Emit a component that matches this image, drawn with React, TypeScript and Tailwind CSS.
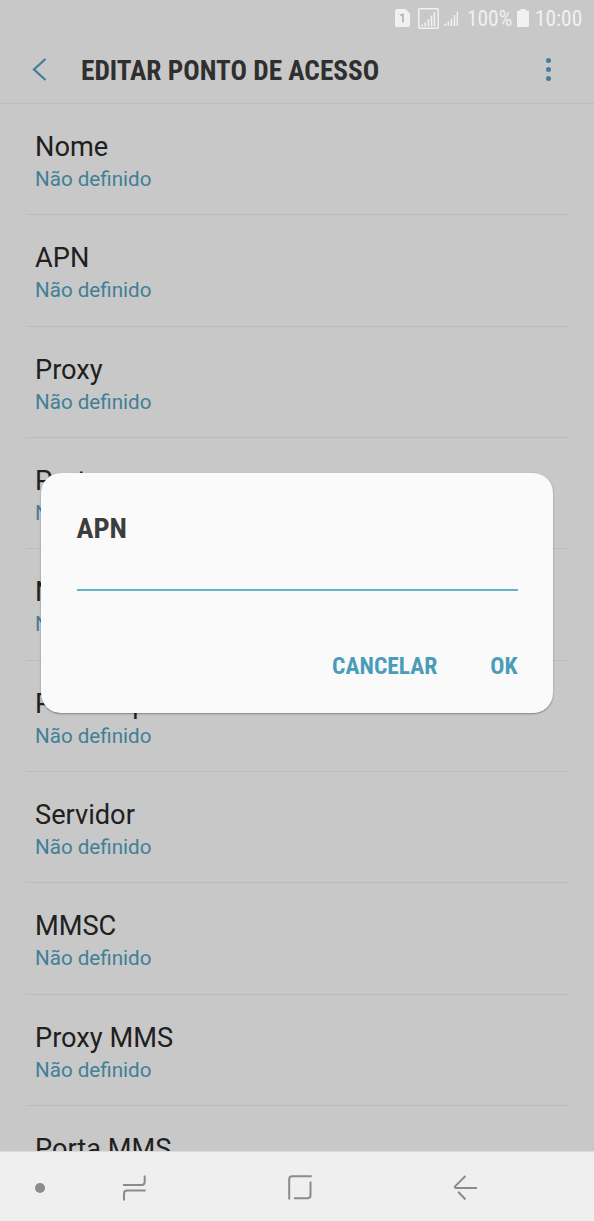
const fields = [
  "Nome",
  "APN",
  "Proxy",
  "Porta",
  "Nome de utilizador",
  "Palavra-passe",
  "Servidor",
  "MMSC",
  "Proxy MMS",
  "Porta MMS",
];

const condensed =
  "font-['Roboto_Condensed',Roboto,sans-serif] font-stretch-condensed whitespace-nowrap";

function SignalBars() {
  return (
    <path
      d="M1.2 15v-2.200M4.300 15v-4.500M7.400 15V7.500M10.500 15V4M13.400 15V.5"
      stroke="currentColor"
      strokeWidth="1.6"
    />
  );
}

function StatusBar() {
  return (
    <div className="flex h-9 items-center justify-end pr-3 text-[#f1f1f1]">
      <svg className="mr-2 h-[18px] w-[15px]" viewBox="0 0 15 18">
        <path
          d="M2 0h8.500L15 4.500V16a2 2 0 0 1-2 2H2a2 2 0 0 1-2-2V2a2 2 0 0 1 2-2Z"
          fill="currentColor"
        />
        <path d="M5 6.500 8 5.300V13.500" stroke="#b8b8b8" strokeWidth="1.8" fill="none" />
      </svg>
      <svg className="mr-[5px] h-[21px] w-[21px]" viewBox="0 0 21 21" fill="none">
        <rect x=".8" y=".8" width="19.4" height="19.4" rx="1" stroke="currentColor" strokeWidth="1.5" />
        <g transform="translate(3 3.5)">
          <SignalBars />
        </g>
      </svg>
      <svg className="mt-px mr-[9px] h-[15px] w-[14px]" viewBox="0 0 14 15" fill="none">
        <SignalBars />
      </svg>
      <span className={`${condensed} w-[45px] pt-0.5 text-[21.4px] leading-9`}>100%</span>
      <svg className="mr-[6px] ml-[5px] h-[18px] w-3" viewBox="0 0 12 18">
        <path
          d="M3.500 0h5v1.500H11a1 1 0 0 1 1 1V17a1 1 0 0 1-1 1H1a1 1 0 0 1-1-1V2.500a1 1 0 0 1 1-1h2.500Z"
          fill="currentColor"
        />
      </svg>
      <span className={`${condensed} w-[47px] pt-0.5 text-[21.4px] leading-9`}>10:00</span>
    </div>
  );
}

function Header() {
  return (
    <header className="flex h-[68px] items-center border-b border-[#bcbcbc] pr-[43px] pl-8 text-[#427f97]">
      <svg className="h-[23px] w-[15px]" viewBox="0 0 15 23" fill="none">
        <path d="M13.5 1 2 11.5 13.5 22" stroke="currentColor" strokeWidth="2.3" />
      </svg>
      <h1 className={`${condensed} mt-1 ml-[34px] text-[27.3px] font-bold text-[#2f2f2f]`}>
        EDITAR PONTO DE ACESSO
      </h1>
      <div className="ml-auto flex flex-col gap-[3.500px]">
        <i className="size-[5.500px] rounded-full bg-current" />
        <i className="size-[5.500px] rounded-full bg-current" />
        <i className="size-[5.500px] rounded-full bg-current" />
      </div>
    </header>
  );
}

function Dialog() {
  return (
    <div className="absolute top-[473px] left-[41px] flex h-[240px] w-[512px] flex-col rounded-[20px] bg-[#fafafa] px-[35.500px] shadow-[0_1px_2px_rgba(0,0,0,0.35)]">
      <h2 className={`${condensed} mt-[38px] text-[28.4px] leading-9 font-bold text-[#3d3d3d]`}>
        APN
      </h2>
      <div className="h-11 border-b-2 border-[#65b1c9]" />
      <div className="mt-[59px] flex justify-end text-[#4a9cb9]">
        <button className={`${condensed} text-[23.500px] leading-8 font-bold`}>CANCELAR</button>
        <button className={`${condensed} ml-[53px] text-[23.500px] leading-8 font-bold`}>OK</button>
      </div>
    </div>
  );
}

function NavBar() {
  return (
    <nav className="flex h-[70px] items-center border-t border-[#dcdcdc] bg-[#efefef] pt-[2px] pl-[35px] text-[#8b8b8b]">
      <i className="size-[10px] rounded-full bg-current" />
      <svg className="ml-[77px] h-[26px] w-6" viewBox="0 0 24 26" fill="none" stroke="currentColor" strokeWidth="2">
        <path d="M1 10h18.500q3.200 0 3.200-3.200V.500M23.700 15.500H5.200q-3.200 0-3.200 3.200v6.800" />
      </svg>
      <svg className="ml-[142px] h-[26px] w-6" viewBox="0 0 24 26" fill="none" stroke="currentColor" strokeWidth="2">
        <path d="M1.200 24.500V4.200Q1.200 1.200 4.200 1.200H23.700M22.500 6.500V20.200q0 3-3 3H6" />
      </svg>
      <svg className="ml-[141px] h-[26px] w-6" viewBox="0 0 24 26" fill="none" stroke="currentColor" strokeWidth="2">
        <path d="M12.500 1 2.300 11q-1.200 2 1 2H24M5.200 16.800l7.300 7.700" />
      </svg>
    </nav>
  );
}

export default function App() {
  return (
    <div className="relative flex h-[1221px] w-[594px] flex-col overflow-hidden bg-[#c8c8c8] font-[Roboto,sans-serif]">
      <StatusBar />
      <Header />
      <main className="min-h-0 flex-1 overflow-hidden px-[26px]">
        {fields.map((label) => (
          <div key={label} className="h-[111.35px] border-b border-[#bcbcbc] pt-[25px] pl-[9px]">
            <div className="text-[27.2px] leading-9 text-[#202020]">{label}</div>
            <div className="text-[20.6px] leading-7 text-[#427f97]">Não definido</div>
          </div>
        ))}
      </main>
      <NavBar />
      <Dialog />
    </div>
  );
}
